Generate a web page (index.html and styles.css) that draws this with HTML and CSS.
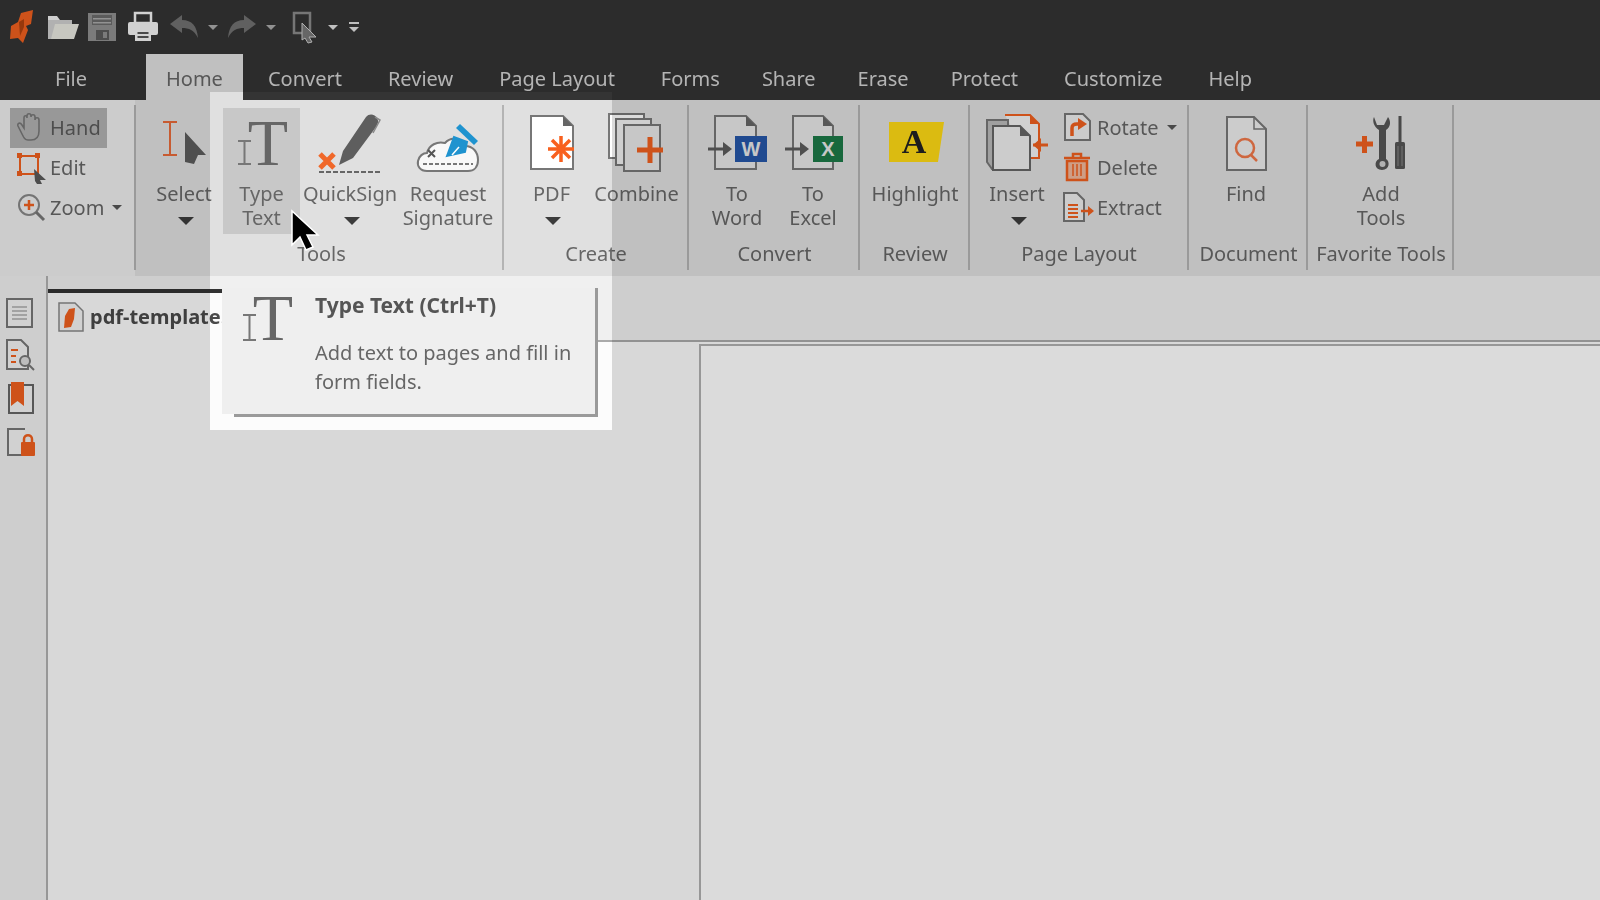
FILE: index.html
```html
<!DOCTYPE html>
<html lang="en">
<head>
    <meta charset="UTF-8">
    <title>Type Text tooltip</title>
    <link rel="stylesheet" href="styles.css">
</head>
<body>
<div class="app">
    <header class="titlebar">
        <div class="qat">
            <svg class="logo" width="26" height="34" viewBox="0 0 26 34"><path d="M12 3 24 0 22 14 17 16 19 20 14 33 9 28 1 29 2 16 9 12 Z" fill="#f0601f"/><path d="M10 12 15 9 15 17 11 26Z" fill="#b0420f"/></svg>
            <svg class="folder" width="34" height="30" viewBox="0 0 34 30"><path d="M2 4H11L14 8H2Z" fill="#f2f2f2"/><path d="M2 8H26V12H10L6 27H2Z" fill="#cfcfcf"/><path d="M9 12H33L28 27H5Z" fill="#e8e8e0"/></svg>
            <svg class="save" width="30" height="30" viewBox="0 0 30 30"><rect x="1" y="1" width="28" height="28" fill="#909090"/><rect x="5" y="3" width="20" height="10" fill="#6a6a6a"/><rect x="6" y="6" width="18" height="1.5" fill="#aaa"/><rect x="6" y="10" width="18" height="1.5" fill="#aaa"/><rect x="9" y="18" width="13" height="10" fill="#5a5a5a"/><rect x="16" y="20" width="4" height="6" fill="#909090"/></svg>
            <svg width="32" height="30" viewBox="0 0 32 30"><rect x="8" y="1" width="16" height="10" fill="none" stroke="#f4f4f4" stroke-width="2.5"/><rect x="1" y="10" width="30" height="13" rx="2" fill="#f4f4f4"/><rect x="8" y="17" width="16" height="12" fill="#f4f4f4"/><rect x="10.500" y="20" width="11" height="2" fill="#555"/><rect x="10.500" y="24" width="11" height="2" fill="#555"/></svg>
            <svg class="undo" width="28" height="26" viewBox="0 0 28 26"><path d="M0 10 12 1V6C22 6 27 12 28 24 24 16 19 14 12 14V19Z" fill="#707070"/></svg>
            <span class="caret small"></span>
            <svg width="28" height="26" viewBox="0 0 28 26"><path d="M28 10 16 1V6C6 6 1 12 0 24 4 16 9 14 16 14V19Z" fill="#707070"/></svg>
            <span class="caret small second"></span>
            <svg class="pick" width="26" height="32" viewBox="0 0 26 32"><rect x="2" y="2" width="16" height="20" fill="none" stroke="#8a8a8a" stroke-width="2.500"/><path d="M10 12 24 26H17L20 31 16 32 13 27 10 29Z" fill="#777" stroke="#ccc"/></svg>
            <span class="caret small light third"></span>
            <span class="more"><i></i><span class="caret small light"></span></span>
        </div>
        <nav class="tabs">
            <a class="tab file">File</a>
            <a class="tab active">Home</a>
            <a class="tab">Convert</a>
            <a class="tab">Review</a>
            <a class="tab">Page Layout</a>
            <a class="tab tight">Forms</a>
            <a class="tab tight">Share</a>
            <a class="tab tight">Erase</a>
            <a class="tab">Protect</a>
            <a class="tab">Customize</a>
            <a class="tab">Help</a>
        </nav>
    </header>

    <section class="ribbon">
        <div class="group hand-group">
            <div class="rows">
                <div class="row selected">
                    <svg width="28" height="30" viewBox="0 0 28 30"><path d="M5 22 1 14C0 11 3 10 5 13L7 16V6C7 3 10 3 10 6V4C10 1 14 1 14 4V5C14 2 18 2 18 5V8C18 5 22 5 22 8V19C22 25 19 28 14 28H11C8 28 7 26 5 22Z" fill="none" stroke="#777" stroke-width="1.600"/></svg>
                    <span>Hand</span>
                </div>
                <div class="row">
                    <svg width="28" height="30" viewBox="0 0 28 30"><rect x="3" y="4" width="18" height="18" fill="none" stroke="#f0601f" stroke-width="2"/><rect x="0" y="1" width="5" height="5" fill="#f0601f"/><rect x="18" y="1" width="5" height="5" fill="#f0601f"/><rect x="0" y="19" width="5" height="5" fill="#f0601f"/><path d="M17 17 29 28H23L25 32H20L18 29Z" fill="#5a5a5a"/></svg>
                    <span>Edit</span>
                </div>
                <div class="row">
                    <svg width="28" height="30" viewBox="0 0 28 30"><circle cx="12" cy="13" r="10" fill="none" stroke="#888" stroke-width="2"/><path d="M19 20 27 28" stroke="#777" stroke-width="3"/><path d="M7 13H17M12 8V18" stroke="#f0601f" stroke-width="2.500"/></svg>
                    <span>Zoom</span>
                    <span class="caret small dark"></span>
                </div>
            </div>
            <div class="label"></div>
        </div>

        <div class="group tools-group">
            <div class="buttons">
                <div class="btn select-btn">
                    <svg class="icon" viewBox="0 0 66 66"><path d="M12 10H26M12 43H26M19 10V43" stroke="#e86a3a" stroke-width="2" fill="none"/><path d="M34 20 55 43H47L43 52 34 50Z" fill="#5c5c5c"/></svg>
                    <span>Select</span>
                    <span class="caret"></span>
                </div>
                <div class="btn type-btn">
                    <svg class="icon" viewBox="0 0 66 66"><text x="39" y="53" class="serif-t" text-anchor="middle">T</text><path d="M9 29H22M9 52H22M15.500 29V52" stroke="#777" stroke-width="2" fill="none"/></svg>
                    <span>Type<br>Text</span>
                </div>
                <div class="btn sign-btn">
                    <svg class="icon" viewBox="0 0 66 66"><path d="M3 42 17 56M17 42 3 56" stroke="#f0682a" stroke-width="5"/><path d="M22 53 26 39 49 5C52 1 58 2 60 6 62 9 61 12 59 15L36 46Z" fill="#5e5e5e"/><path d="M58 5 63 8 56 21" fill="none" stroke="#8a8a8a" stroke-width="1.500"/><path d="M2 60H64" stroke="#666" stroke-width="2" stroke-dasharray="5 2"/></svg>
                    <span>QuickSign</span>
                    <span class="caret"></span>
                </div>
                <div class="btn">
                    <svg class="icon" viewBox="0 0 66 66"><path d="M12 59C5 59 2 54 3 49 4 44 8 41 12 41 14 33 22 29 30 31 36 24 46 26 50 34 58 34 63 40 63 48 63 55 59 59 53 59Z" fill="#f8f8f8" stroke="#777" stroke-width="2"/><path d="M32 44 39 25 52 30 50 40Z" fill="#1f93cf" stroke="#1f93cf" stroke-width="2"/><path d="M41 16 45 12 63 29 59 33Z" fill="#1f93cf"/><path d="M44 35 37 43" stroke="#fff" stroke-width="1.500"/><path d="M13 38 20 45M20 38 13 45" stroke="#555" stroke-width="2"/><path d="M8 52H58" stroke="#777" stroke-width="2" stroke-dasharray="4 2"/></svg>
                    <span>Request<br>Signature</span>
                </div>
            </div>
            <div class="label">Tools</div>
        </div>

        <div class="group create-group">
            <div class="buttons">
                <div class="btn">
                    <svg class="icon" viewBox="0 0 66 66"><path d="M12 4H44L54 14V57H12Z" fill="#fff" stroke="#777" stroke-width="2"/><path d="M44 4V14H54Z" fill="#666"/><path d="M42 24V50M29 37H55M33 28 51 46M51 28 33 46" stroke="#f8601e" stroke-width="3.500"/></svg>
                    <span>PDF</span>
                    <span class="caret"></span>
                </div>
                <div class="btn">
                    <svg class="icon" viewBox="0 0 66 66"><rect x="5" y="2" width="35" height="44" fill="#fff" stroke="#777" stroke-width="2"/><rect x="12" y="7" width="35" height="46" fill="#f2f2f2" stroke="#777" stroke-width="2"/><rect x="20" y="13" width="36" height="46" fill="#e8e8e8" stroke="#777" stroke-width="2"/><path d="M33 38H59M46 25V51" stroke="#f0601f" stroke-width="5"/></svg>
                    <span>Combine</span>
                </div>
            </div>
            <div class="label">Create</div>
        </div>

        <div class="group convert-group">
            <div class="buttons">
                <div class="btn">
                    <svg class="icon" viewBox="0 0 66 66"><path d="M11 4H42L52 14V57H11Z" fill="#e8e8e8" stroke="#777" stroke-width="2"/><path d="M42 4V14H52Z" fill="#666"/><path d="M4 37H20" stroke="#5c5c5c" stroke-width="3"/><path d="M19 30 28 37 19 44Z" fill="#5c5c5c"/><rect x="31" y="24" width="32" height="26" fill="#2657a8"/><text x="47" y="44" class="badge" text-anchor="middle">W</text></svg>
                    <span>To<br>Word</span>
                </div>
                <div class="btn">
                    <svg class="icon" viewBox="0 0 66 66"><path d="M13 4H43L53 14V57H13Z" fill="#e8e8e8" stroke="#777" stroke-width="2"/><path d="M43 4V14H53Z" fill="#666"/><path d="M5 37H21" stroke="#5c5c5c" stroke-width="3"/><path d="M20 30 29 37 20 44Z" fill="#5c5c5c"/><rect x="33" y="24" width="30" height="26" fill="#1c7a47"/><text x="48" y="44" class="badge" text-anchor="middle">X</text></svg>
                    <span>To<br>Excel</span>
                </div>
            </div>
            <div class="label">Convert</div>
        </div>

        <div class="group review-group">
            <div class="buttons">
                <div class="btn">
                    <svg class="icon" viewBox="0 0 66 66"><path d="M7 10H62L56 50H7Z" fill="#ffda14"/><text x="32" y="41" class="serif-a" text-anchor="middle">A</text></svg>
                    <span>Highlight</span>
                </div>
            </div>
            <div class="label">Review</div>
        </div>

        <div class="group layout-group">
            <div class="buttons">
                <div class="btn insert-btn">
                    <svg class="icon" viewBox="0 0 66 66"><path d="M21 3H46L55 12V46H44" fill="#f4f4f4" stroke="#f0601f" stroke-width="2"/><path d="M46 3V12H55Z" fill="#f0601f"/><path d="M3 8H24V57H8L3 50Z" fill="#bbb" stroke="#777" stroke-width="2"/><path d="M9 14H36L46 24V58H9Z" fill="#eee" stroke="#666" stroke-width="2"/><path d="M36 14V24H46Z" fill="#666"/><path d="M49 33H64" stroke="#f0601f" stroke-width="3"/><path d="M57 26 49 33 57 40Z" fill="#f0601f"/></svg>
                    <span>Insert</span>
                    <span class="caret"></span>
                </div>
                <div class="rows">
                    <div class="row">
                        <svg width="28" height="30" viewBox="0 0 28 30"><path d="M2 2H20L27 9V28H2Z" fill="#eee" stroke="#777" stroke-width="2"/><path d="M9 24V16C9 13 11 12 14 12H16" fill="none" stroke="#f0601f" stroke-width="3.500"/><path d="M15 6 24 12 15 18Z" fill="#f0601f"/></svg>
                        <span>Rotate</span>
                        <span class="caret small dark"></span>
                    </div>
                    <div class="row">
                        <svg width="28" height="30" viewBox="0 0 28 30"><path d="M1 6H27M10 5V2H18V5" stroke="#f0601f" stroke-width="2.500" fill="none"/><path d="M4 9H24V28H4Z" fill="#f0b89c" stroke="#f0601f" stroke-width="2.500"/><path d="M10 12V24M14 12V24M18 12V24" stroke="#f0601f" stroke-width="1.500"/></svg>
                        <span>Delete</span>
                    </div>
                    <div class="row extract">
                        <svg width="32" height="30" viewBox="0 0 32 30"><path d="M1 1H14L21 8V29H1Z" fill="#eee" stroke="#777" stroke-width="2"/><path d="M5 13H15M5 17H15M5 21H15M5 25H15" stroke="#f0601f" stroke-width="2"/><path d="M18 19H27" stroke="#f0601f" stroke-width="2.500"/><path d="M25 14 31 19 25 24Z" fill="#f0601f"/></svg>
                        <span>Extract</span>
                    </div>
                </div>
            </div>
            <div class="label">Page Layout</div>
        </div>

        <div class="group document-group">
            <div class="buttons">
                <div class="btn">
                    <svg class="icon" viewBox="0 0 66 66"><path d="M14 5H41L53 17V58H14Z" fill="#eee" stroke="#777" stroke-width="2"/><path d="M41 5V17H53" fill="none" stroke="#777" stroke-width="1.500"/><circle cx="32" cy="36" r="9" fill="none" stroke="#f0784a" stroke-width="2.500"/><path d="M38 43 44 49" stroke="#f0784a" stroke-width="2.500"/></svg>
                    <span>Find</span>
                </div>
            </div>
            <div class="label">Document</div>
        </div>

        <div class="group favorite-group">
            <div class="buttons">
                <div class="btn">
                    <svg class="icon" viewBox="0 0 66 66"><path d="M8 32H25M16.500 24V41" stroke="#f0601f" stroke-width="5"/><path d="M26 5 29 13H36L40 5C43 9 43 15 38 18V47C42 49 42 58 34 58 26 58 26 49 31 47V18C26 15 24 9 26 5Z" fill="#555"/><circle cx="34.500" cy="52" r="3" fill="#cfcfcf"/><rect x="50.500" y="4" width="3" height="26" fill="#555"/><rect x="47" y="30" width="10" height="27" rx="1.500" fill="#555"/><path d="M50 34V54M54 34V54" stroke="#8a8a8a"/></svg>
                    <span>Add<br>Tools</span>
                </div>
            </div>
            <div class="label">Favorite Tools</div>
        </div>
    </section>

    <div class="workspace">
        <aside class="rail">
            <svg width="30" height="30" viewBox="0 0 30 30"><rect x="2" y="1" width="25" height="28" fill="#f4f4f4" stroke="#777" stroke-width="2"/><path d="M7 9H22M7 13H22M7 17H22M7 21H22" stroke="#aaa" stroke-width="1.500"/></svg>
            <svg width="30" height="32" viewBox="0 0 30 32"><path d="M2 1H16L23 8V30H2Z" fill="#f4f4f4" stroke="#777" stroke-width="2"/><path d="M6 11H13M6 17H11M6 23H11" stroke="#f0601f" stroke-width="2"/><circle cx="20" cy="22" r="5" fill="#ddd" stroke="#777" stroke-width="2"/><path d="M24 26 29 31" stroke="#777" stroke-width="2"/></svg>
            <svg width="30" height="32" viewBox="0 0 30 32"><rect x="4" y="3" width="24" height="28" fill="#f4f4f4" stroke="#666" stroke-width="2"/><path d="M6 0H19V24L12.500 19 6 24Z" fill="#f0601f"/></svg>
            <svg class="lock" width="32" height="30" viewBox="0 0 32 30"><path d="M20 1H3V27H19" fill="#f4f4f4" stroke="#777" stroke-width="2"/><rect x="16" y="14" width="14" height="14" rx="1" fill="#f0601f"/><path d="M19 14V11C19 6 27 6 27 11V14" fill="none" stroke="#f0601f" stroke-width="2.500"/></svg>
        </aside>
        <main class="doc-area">
            <div class="doc-strip">
                <div class="doc-tab">
                    <svg width="26" height="30" viewBox="0 0 26 30"><path d="M1 1H17L25 9V29H1Z" fill="#f4f4f4" stroke="#888" stroke-width="1.500"/><path d="M11 7 17 6 16 17 13 25 6 26 7 14Z" fill="#f0601f"/></svg>
                    <span>pdf-template.pdf</span>
                </div>
            </div>
            <div class="doc-body">
                <div class="page"></div>
            </div>
        </main>
    </div>

    <div class="spotlight"></div>

    <div class="tooltip">
        <div class="tooltip-icon">
            <svg width="66" height="60" viewBox="0 0 66 60"><text x="35" y="50" class="serif-t" text-anchor="middle">T</text><path d="M5 25H18M5 50H18M11.500 25V50" stroke="#777" stroke-width="2" fill="none"/></svg>
        </div>
        <div class="tooltip-text">
            <h4>Type Text (Ctrl+T)</h4>
            <p>Add text to pages and fill in form fields.</p>
        </div>
    </div>

    <svg class="cursor" width="32" height="44" viewBox="0 0 32 44"><path d="M3 2V36L11 28 17 41 24 38 18 26H29Z" fill="#000" stroke="#fff" stroke-width="1.500"/></svg>
</div>
</body>
</html>
```

FILE: styles.css
```css
*, *::before, *::after{
    box-sizing: border-box;
}
body{
    margin: 0;
    background: #fcfcfc;
}
.app{
    position: relative;
    width: 1600px;
    height: 900px;
    overflow: hidden;
    display: flex;
    flex-direction: column;
    font-family: "Noto Sans", sans-serif;
    font-size: 20px;
    color: #666;
    filter: blur(0.5px);
}
svg{
    display: block;
    flex: none;
    overflow: visible;
}

/* title bar */
.titlebar{
    background: #343434;
    height: 100px;
    flex: none;
}
.qat{
    height: 54px;
    display: flex;
    align-items: center;
    padding-left: 9px;
    gap: 10px;
}
.qat .logo{ margin-right: 1px; }
.qat .save{ margin-left: -3px; }
.qat .undo{ margin-left: 1px; }
.qat .second{ margin-left: 2px; }
.qat .pick{ margin-left: 6px; }
.qat .third{ margin-left: -11px; }
.more{
    display: flex;
    flex-direction: column;
    align-items: center;
    gap: 3px;
    margin-left: 1px;
}
.more i{
    display: block;
    width: 10px;
    height: 2px;
    background: #ddd;
}
.tabs{
    height: 46px;
    display: flex;
    padding-left: 32px;
}
.tab{
    padding: 0 23px;
    line-height: 50px;
    color: #d2d2d2;
}
.tab.file{
    margin-right: 36px;
}
.tab.tight{
    margin-right: -4px;
}
.tab.active{
    padding: 0 20px;
    margin-right: 2px;
    background: #e0e0e0;
    color: #666;
}

/* carets */
.caret{
    display: block;
    width: 0;
    height: 0;
    border-left: 8px solid transparent;
    border-right: 8px solid transparent;
    border-top: 8px solid #3c3c3c;
    margin: 11px 0 0 3px;
}
.caret.small{
    border-left-width: 5px;
    border-right-width: 5px;
    border-top-width: 5px;
    border-top-color: #aaa;
    margin: 0;
}
.caret.small.light{
    border-top-color: #e0e0e0;
}
.caret.small.dark{
    border-top-color: #555;
    margin-left: 3px;
}

/* ribbon */
.ribbon{
    height: 176px;
    flex: none;
    display: flex;
    background: linear-gradient(90deg, #eeeeee 135px, #e0e0e0 135px);
}
.group{
    position: relative;
    padding-top: 8px;
    display: flex;
    flex-direction: column;
}
.group::after{
    content: "";
    position: absolute;
    right: 0;
    top: 5px;
    bottom: 6px;
    width: 2px;
    background: #b4b4b4;
}
.hand-group{ width: 136px; padding-left: 10px; }
.tools-group{ width: 368px; padding-left: 13px; }
.create-group{ width: 185px; padding-left: 5px; }
.convert-group{ width: 171px; padding-left: 10px; }
.review-group{ width: 110px; }
.layout-group{ width: 219px; padding-left: 9px; }
.document-group{ width: 119px; }
.favorite-group{ width: 146px; }
.buttons{
    height: 126px;
    display: flex;
}
.label{
    margin-top: 8px;
    line-height: 24px;
    text-align: center;
}
.tools-group .label,
.convert-group .label,
.layout-group .label{
    margin-left: -10px;
}
.create-group .label{
    margin-left: -6px;
}
.btn{
    display: flex;
    flex-direction: column;
    align-items: center;
    width: 85px;
    padding-top: 4px;
    line-height: 24px;
    text-align: center;
    white-space: nowrap;
    flex: none;
}
.btn .icon{
    width: 66px;
    height: 66px;
    margin-bottom: 4px;
}
.select-btn{ width: 70px; margin-right: 4px; }
.type-btn{ width: 77px; background: #c8c8c8; }
.sign-btn{ width: 100px; }
.sign-btn + .btn{ width: 96px; }
.convert-group .btn{ width: 76px; }
.review-group .btn{ width: 110px; }
.insert-btn{ width: 76px; }
.document-group .btn{ width: 114px; }
.favorite-group .btn{ width: 146px; }

.rows{
    display: flex;
    flex-direction: column;
}
.row{
    height: 40px;
    display: flex;
    align-items: center;
    padding: 0 0 2px 7px;
    gap: 5px;
    white-space: nowrap;
}
.row.selected{
    width: 97px;
    background: #b2b2b2;
    color: #5a5a5a;
}
.layout-group .row{
    padding-left: 8px;
    gap: 6px;
}
.row.extract svg{
    margin-right: -4px;
}

/* text in icons */
.serif-t{
    font-family: "Liberation Serif", serif;
    font-size: 66px;
    fill: #666;
}
.serif-a{
    font-family: "Liberation Serif", serif;
    font-size: 34px;
    font-weight: bold;
    fill: #222;
}
.badge{
    font-family: "Liberation Sans", sans-serif;
    font-size: 20px;
    font-weight: bold;
    fill: #e8e8e8;
}

/* document area */
.workspace{
    flex: 1;
    display: flex;
    min-height: 0;
}
.rail{
    width: 48px;
    flex: none;
    padding: 22px 0 0 5px;
    display: flex;
    flex-direction: column;
    gap: 11px;
    background: #f0f0f0;
    border-right: 2px solid #b0b0b0;
}
.rail .lock{
    margin-top: 3px;
}
.doc-area{
    flex: 1;
    display: flex;
    flex-direction: column;
}
.doc-strip{
    height: 66px;
    flex: none;
    padding-top: 13px;
    background: #f0f0f0;
    border-bottom: 2px solid #aaa;
}
.doc-tab{
    width: 240px;
    height: 53px;
    display: flex;
    align-items: flex-start;
    gap: 6px;
    padding: 9px 0 0 10px;
    border-top: 4px solid #333;
    background: #fcfcfc;
    font-weight: 700;
    line-height: 30px;
    color: #4a4a4a;
    white-space: nowrap;
}
.doc-body{
    flex: 1;
    padding: 2px 0 0 651px;
    background: #fcfcfc;
}
.page{
    height: 100%;
    background: #ffffff;
    border-left: 2px solid #b0b0b0;
    border-top: 2px solid #b0b0b0;
}

/* spotlight over the dimmed window */
.spotlight{
    position: absolute;
    left: 210px;
    top: 92px;
    width: 402px;
    height: 338px;
    box-shadow: 0 0 0 2000px rgba(0, 0, 0, 0.14);
}
.tooltip{
    position: absolute;
    left: 222px;
    top: 288px;
    width: 373px;
    height: 126px;
    display: flex;
    background: #efefef;
}
.tooltip::after{
    content: "";
    position: absolute;
    left: 12px;
    top: 0;
    right: -3px;
    bottom: -3px;
    border-right: 3px solid #9a9a9a;
    border-bottom: 3px solid #9a9a9a;
}
.tooltip-icon{
    width: 93px;
    flex: none;
    padding: 2px 0 0 16px;
}
.tooltip-text{
    padding-top: 5px;
}
.tooltip-text h4{
    margin: 0 0 21px;
    font-size: 21px;
    line-height: 24px;
    font-weight: 700;
    color: #555;
}
.tooltip-text p{
    margin: 0;
    width: 272px;
    line-height: 29px;
}
.cursor{
    position: absolute;
    left: 289px;
    top: 209px;
}
```
